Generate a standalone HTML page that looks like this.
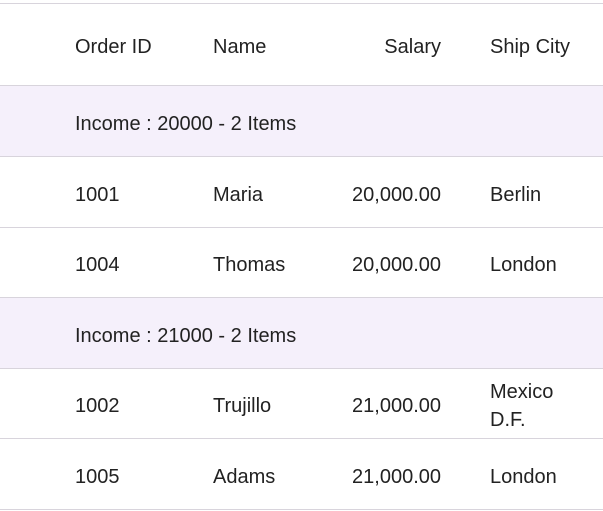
<!DOCTYPE html>
<html><head><style>
body{margin:0;width:603px;height:511px;background:#fff;position:relative;overflow:hidden;font-family:"Liberation Sans",sans-serif;font-size:20px;color:#222;}
.l{position:absolute;left:0;width:603px;height:1px;background:#d8d4dc;}
.g{position:absolute;left:0;width:603px;background:#f5f0fb;}
.t{position:absolute;line-height:28px;white-space:nowrap;}
.r{text-align:right;width:150px;}
</style></head><body>
<div class="l" style="top:3px"></div>
<div class="g" style="top:86px;height:70px"></div>
<div class="g" style="top:298px;height:70px"></div>
<div class="l" style="top:85px"></div>
<div class="l" style="top:156px"></div>
<div class="l" style="top:227px"></div>
<div class="l" style="top:297px"></div>
<div class="l" style="top:368px"></div>
<div class="l" style="top:438px"></div>
<div class="l" style="top:509px"></div>

<div class="t" style="left:75px;top:33px">Order ID</div>
<div class="t" style="left:213px;top:33px">Name</div>
<div class="t r" style="left:291px;top:33px">Salary</div>
<div class="t" style="left:490px;top:33px">Ship City</div>

<div class="t" style="left:75px;top:110px">Income : 20000 - 2 Items</div>

<div class="t" style="left:75px;top:181px">1001</div>
<div class="t" style="left:213px;top:181px">Maria</div>
<div class="t r" style="left:291px;top:181px">20,000.00</div>
<div class="t" style="left:490px;top:181px">Berlin</div>

<div class="t" style="left:75px;top:251px">1004</div>
<div class="t" style="left:213px;top:251px">Thomas</div>
<div class="t r" style="left:291px;top:251px">20,000.00</div>
<div class="t" style="left:490px;top:251px">London</div>

<div class="t" style="left:75px;top:322px">Income : 21000 - 2 Items</div>

<div class="t" style="left:75px;top:392px">1002</div>
<div class="t" style="left:213px;top:392px">Trujillo</div>
<div class="t r" style="left:291px;top:392px">21,000.00</div>
<div class="t" style="left:490px;top:378px">Mexico</div>
<div class="t" style="left:490px;top:406px">D.F.</div>

<div class="t" style="left:75px;top:463px">1005</div>
<div class="t" style="left:213px;top:463px">Adams</div>
<div class="t r" style="left:291px;top:463px">21,000.00</div>
<div class="t" style="left:490px;top:463px">London</div>
</body></html>
